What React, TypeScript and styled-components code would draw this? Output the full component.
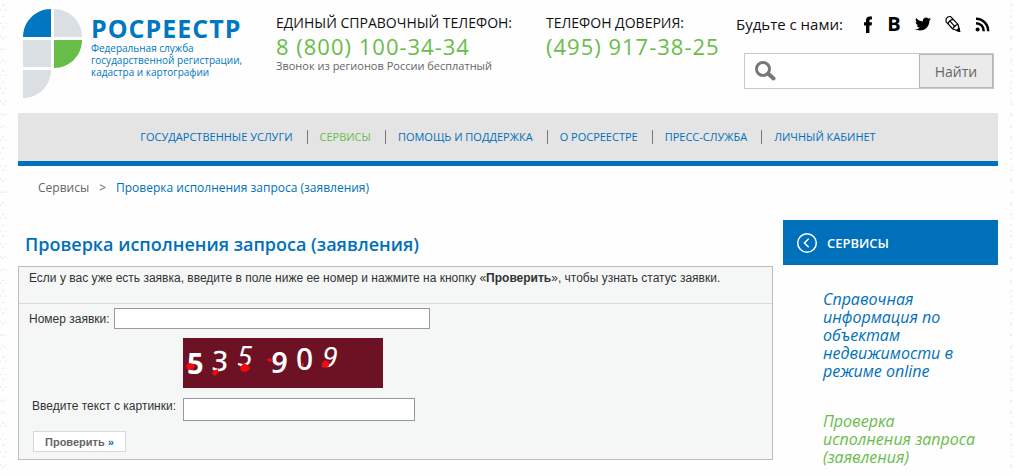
import React from 'react';
import styled, { createGlobalStyle } from 'styled-components';
import { FaTwitter } from 'react-icons/fa';

const sans = '"Open Sans", "Noto Sans", sans-serif';
const blue = '#0070ba';
const green = '#68bd49';

const GlobalStyle = createGlobalStyle`
  *, *::before, *::after { box-sizing: border-box; }
  body {
    margin: 0;
    background-color: #fefefe;
    background-image:
      radial-gradient(circle, #ececec 1px, transparent 1px),
      radial-gradient(circle, #f1f1f1 1px, transparent 1px);
    background-size: 7px 11px, 5px 13px;
    background-position: 0 0, 3px 4px;
    font-family: ${sans};
    color: #333;
  }
  a { color: inherit; text-decoration: none; }
`;

const Page = styled.div`
  margin: 0 7px 0 8px;
  padding: 0 10px 16px;
  background: #fefefe;
`;

const Header = styled.header`
  display: flex;
  height: 113px;
`;

const Brand = styled.a`
  flex: 0 0 258px;
  display: flex;
  gap: 8px;
  padding: 9px 0 0 5px;
  color: #0077c0;
`;

const BrandText = styled.span`
  display: flex;
  flex-direction: column;
  padding-top: 5px;
`;

const BrandName = styled.strong`
  font-size: 25px;
  line-height: 28px;
  letter-spacing: 1px;
`;

const BrandNote = styled.span`
  font-size: 10px;
  font-weight: 500;
  line-height: 12px;
  white-space: nowrap;
`;

const Phone = styled.div<{ $width: number }>`
  flex: 0 0 ${(p) => p.$width}px;
  padding-top: 14px;
  white-space: nowrap;
`;

const PhoneTitle = styled.div`
  font-size: 14px;
  line-height: 18px;
  color: #111;
`;

const PhoneNumber = styled.div`
  font-size: 22px;
  line-height: 28px;
  letter-spacing: 1px;
  color: ${green};
`;

const PhoneNote = styled.div`
  font-size: 11px;
  line-height: 12px;
  color: #666;
`;

const Contact = styled.div`
  flex: 1;
  min-width: 0;
  padding: 14px 4px 0 0;
`;

const Social = styled.div`
  display: flex;
  align-items: center;
  justify-content: space-between;
  height: 20px;
  font-size: 15px;
  line-height: 20px;
  color: #111;
  white-space: nowrap;
`;

const SocialLinks = styled.div`
  display: flex;
  justify-content: space-between;
  align-items: center;
  width: 132px;
  padding-right: 4px;
  color: #000;
  a { display: flex; }
`;

const VkMark = styled.span`
  font-size: 20px;
  font-weight: 700;
  line-height: 20px;
`;

const Search = styled.form`
  display: flex;
  height: 36px;
  margin: 19px 0 0 8px;
  border: 1px solid #c8c8c8;
  background: #fff;
`;

const SearchLabel = styled.label`
  flex: 1;
  display: flex;
  align-items: center;
  padding-left: 10px;
  min-width: 0;
`;

const SearchInput = styled.input`
  flex: 1;
  min-width: 0;
  height: 100%;
  border: 0;
  background: transparent;
  font: 14px ${sans};
  outline: none;
`;

const SearchButton = styled.button`
  flex: 0 0 74px;
  padding: 0;
  border: 1px solid #b5b5b5;
  background: #ebebeb;
  color: #666;
  font: 14px ${sans};
`;

const Nav = styled.nav`
  display: flex;
  justify-content: center;
  align-items: center;
  height: 53px;
  border-bottom: 5px solid ${blue};
  background: #e4e4e4;
`;

const NavLink = styled.a<{ $active?: boolean }>`
  display: flex;
  align-items: center;
  font-size: 11px;
  line-height: 14px;
  white-space: nowrap;
  color: ${(p) => (p.$active ? green : blue)};
  &:not(:first-child)::before {
    content: '';
    width: 1px;
    height: 14px;
    margin: 0 12px 0 14px;
    background: #777;
  }
`;

const Crumbs = styled.nav`
  display: flex;
  gap: 10px;
  padding: 12px 20px 0;
  font-size: 12px;
  line-height: 20px;
  color: #666;
  a:last-child { color: ${blue}; }
`;

const Columns = styled.div`
  display: flex;
  align-items: flex-start;
  gap: 10px;
  padding-top: 22px;
`;

const Main = styled.main`
  flex: 1;
  min-width: 0;
`;

const Title = styled.h1`
  margin: 0;
  padding: 10px 7px 8px;
  font-size: 18px;
  line-height: 28px;
  font-weight: 600;
  color: ${blue};
`;

const Panel = styled.form`
  border: 1px solid #bdbdbd;
  background: #f5f7f7;
  font-family: "Liberation Sans", Arial, sans-serif;
  font-size: 12px;
  line-height: 16px;
  color: #333;
`;

const Intro = styled.p`
  margin: 0;
  padding: 3px 10px 17px;
  border-bottom: 1px solid #d9d9d9;
`;

const Fields = styled.div`
  padding: 4px 10px 7px;
`;

const NumberRow = styled.div`
  display: flex;
  align-items: center;
  gap: 4px;
`;

const CaptchaGrid = styled.div`
  display: grid;
  grid-template-columns: 151px 232px;
  row-gap: 10px;
  padding: 9px 0 0 3px;
  align-items: start;
`;

const CaptchaImage = styled.svg`
  grid-column: 2;
  display: block;
`;

const Field = styled.input<{ $width: number; $height: number }>`
  width: ${(p) => p.$width}px;
  height: ${(p) => p.$height}px;
  padding: 0 4px;
  border: 1px solid #9498a0;
  background: #fff;
  font: inherit;
`;

const Submit = styled.button`
  display: block;
  height: 21px;
  margin: 10px 0 0 4px;
  padding: 0 11px;
  border: 1px solid #d9d9d9;
  background: #fff;
  color: #666;
  font: bold 11px "Liberation Sans", Arial, sans-serif;
  span { color: ${blue}; }
`;

const Sidebar = styled.aside`
  flex: 0 0 215px;
`;

const SidebarHead = styled.a`
  display: flex;
  align-items: center;
  gap: 9px;
  height: 45px;
  padding-left: 13px;
  background: ${blue};
  && { color: #fff; }
  font-size: 13px;
  font-weight: 600;
`;

const SidebarList = styled.ul`
  display: flex;
  flex-direction: column;
  gap: 32px;
  margin: 0;
  padding: 25px 15px 0 40px;
  list-style: none;
`;

const SidebarItem = styled.li<{ $active?: boolean }>`
  font-size: 16px;
  font-style: italic;
  line-height: 18px;
  color: ${(p) => (p.$active ? green : blue)};
`;

const sections = [
  'ГОСУДАРСТВЕННЫЕ УСЛУГИ',
  'СЕРВИСЫ',
  'ПОМОЩЬ И ПОДДЕРЖКА',
  'О РОСРЕЕСТРЕ',
  'ПРЕСС-СЛУЖБА',
  'ЛИЧНЫЙ КАБИНЕТ',
];

const Logo = () => (
  <svg width="60" height="90" viewBox="0 0 60 90" aria-hidden="true">
    <path d="M28 0V28H0C0 13 12 0 28 0Z" fill="#0077c0" />
    <path d="M31 0C46 0 59 12 59 28H31Z" fill="#d9dfe2" />
    <path d="M0 31H28V58H0Z" fill="#d9dfe2" />
    <path d="M31 31H59C59 46 47 59 31 59Z" fill="#68bd49" />
    <path d="M0 61H28C28 76 16 89 0 89Z" fill="#d9dfe2" />
  </svg>
);

const Facebook = () => (
  <svg width="11" height="17" viewBox="0 0 11 17" aria-hidden="true">
    <path d="M4 17V9.5H2V6.3H4V4.2C4 1.6 5.5 .4 7.6 .4H10V3.5H8.6C7.7 3.5 7.4 3.9 7.4 4.7V6.3H10L9.6 9.5H7.4V17Z" />
  </svg>
);

const Feed = () => (
  <svg width="15" height="15" viewBox="0 0 15 15" fill="none" stroke="#000" strokeWidth="2.5" aria-hidden="true">
    <circle cx="2.6" cy="12.4" r="2" fill="#000" stroke="none" />
    <path d="M1 6.2C5.4 6.2 8.8 9.6 8.8 14.2M1 1.8C7.8 1.8 13.2 7.2 13.2 14.2" />
  </svg>
);

const Pencil = () => (
  <svg width="16" height="18" viewBox="0 0 16 18" fill="none" stroke="#000" strokeWidth="1.2" strokeLinejoin="round" aria-hidden="true">
    <path d="M1 5C1 3 3.5 1 5.6 1.6L13 9.3L14.7 16.5L7.8 14L1.2 6.8Z" />
    <path d="M3 8.8C3.8 6.5 6 4.4 8.3 4.6M5 6.2L10.3 12.2M7.8 14C8.4 12 10.5 9.8 13 9.3" />
    <path d="M11.5 15.4L14.7 16.5L14 13.2Z" fill="#000" />
  </svg>
);

const Captcha = () => (
  <CaptchaImage width="200" height="50" viewBox="0 0 200 50" role="img" aria-label="Код с картинки">
    <rect width="200" height="50" fill="#6c1224" />
    <g fill="#fff" fontFamily='"Noto Sans", sans-serif'>
      <text x="4" y="36" fontSize="29" fontWeight="700">5</text>
      <text x="29" y="33" fontSize="28" fontWeight="500" transform="rotate(3 36 22)">3</text>
      <text x="54" y="28" fontSize="28" fontStyle="italic">5</text>
      <text x="88" y="35" fontSize="29" fontWeight="600" transform="rotate(6 96 24)">9</text>
      <text x="113" y="32" fontSize="30" fontWeight="500">0</text>
      <text x="139" y="29" fontSize="28" fontStyle="italic" transform="rotate(4 147 18)">9</text>
    </g>
    <g fill="#f00a0a">
      <path d="M3 27L6 25L11 26L12 29L9 32L4 31Z" />
      <path d="M30 33L35 31L35 35L32 38L29 36Z" />
      <path d="M57 29L61 25L66 28L67 31L63 34L58 33Z" />
      <path d="M84 21L87 20L90 22L88 24L85 23Z" />
      <path d="M118 25L121 25L121 28L118 28Z" />
      <path d="M139 25L142 22L146 24L146 28L142 30L139 28Z" />
    </g>
  </CaptchaImage>
);

export default function App() {
  return (
    <>
      <GlobalStyle />
      <Page>
        <Header>
          <Brand href="#">
            <Logo />
            <BrandText>
              <BrandName>РОСРЕЕСТР</BrandName>
              <BrandNote>
                Федеральная служба<br />
                государственной регистрации,<br />
                кадастра и картографии
              </BrandNote>
            </BrandText>
          </Brand>
          <Phone $width={270}>
            <PhoneTitle>ЕДИНЫЙ СПРАВОЧНЫЙ ТЕЛЕФОН:</PhoneTitle>
            <PhoneNumber>8 (800) 100-34-34</PhoneNumber>
            <PhoneNote>Звонок из регионов России бесплатный</PhoneNote>
          </Phone>
          <Phone $width={190}>
            <PhoneTitle>ТЕЛЕФОН ДОВЕРИЯ:</PhoneTitle>
            <PhoneNumber>(495) 917-38-25</PhoneNumber>
          </Phone>
          <Contact>
            <Social>
              Будьте с нами:
              <SocialLinks>
                <a href="#" aria-label="Facebook"><Facebook /></a>
                <a href="#" aria-label="ВКонтакте"><VkMark>B</VkMark></a>
                <a href="#" aria-label="Twitter"><FaTwitter size={16} /></a>
                <a href="#" aria-label="Живой Журнал"><Pencil /></a>
                <a href="#" aria-label="RSS"><Feed /></a>
              </SocialLinks>
            </Social>
            <Search>
              <SearchLabel>
                <svg width="21" height="20" viewBox="0 0 21 20" fill="none" stroke="#777" aria-hidden="true">
                  <circle cx="8" cy="8" r="6.5" strokeWidth="3" />
                  <path d="M13 12.5L18.5 17.5" strokeWidth="4" strokeLinecap="round" />
                </svg>
                <SearchInput type="text" aria-label="Поиск" />
              </SearchLabel>
              <SearchButton type="button">Найти</SearchButton>
            </Search>
          </Contact>
        </Header>

        <Nav>
          {sections.map((name) => (
            <NavLink key={name} href="#" $active={name === 'СЕРВИСЫ'}>{name}</NavLink>
          ))}
        </Nav>

        <Crumbs>
          <a href="#">Сервисы</a>
          <span>&gt;</span>
          <a href="#">Проверка исполнения запроса (заявления)</a>
        </Crumbs>

        <Columns>
          <Main>
            <Title>Проверка исполнения запроса (заявления)</Title>
            <Panel>
              <Intro>
                Если у вас уже есть заявка, введите в поле ниже ее номер и нажмите на кнопку «<b>Проверить</b>», чтобы узнать статус заявки.
              </Intro>
              <Fields>
                <NumberRow>
                  <label htmlFor="number">Номер заявки:</label>
                  <Field id="number" type="text" $width={316} $height={21} />
                </NumberRow>
                <CaptchaGrid>
                  <Captcha />
                  <label htmlFor="code">Введите текст с картинки:</label>
                  <Field id="code" type="text" $width={232} $height={23} />
                </CaptchaGrid>
                <Submit type="button">Проверить <span>»</span></Submit>
              </Fields>
            </Panel>
          </Main>
          <Sidebar>
            <SidebarHead href="#">
              <svg width="22" height="22" viewBox="0 0 22 22" fill="none" stroke="#fff" strokeWidth="1.5" aria-hidden="true">
                <circle cx="11" cy="11" r="9.3" />
                <path d="M12.7 6.7L8.4 11L12.7 15.3" />
              </svg>
              СЕРВИСЫ
            </SidebarHead>
            <SidebarList>
              <SidebarItem>
                <a href="#">Справочная информация по объектам недвижимости в режиме online</a>
              </SidebarItem>
              <SidebarItem $active>
                <a href="#">Проверка исполнения запроса (заявления)</a>
              </SidebarItem>
            </SidebarList>
          </Sidebar>
        </Columns>
      </Page>
    </>
  );
}
